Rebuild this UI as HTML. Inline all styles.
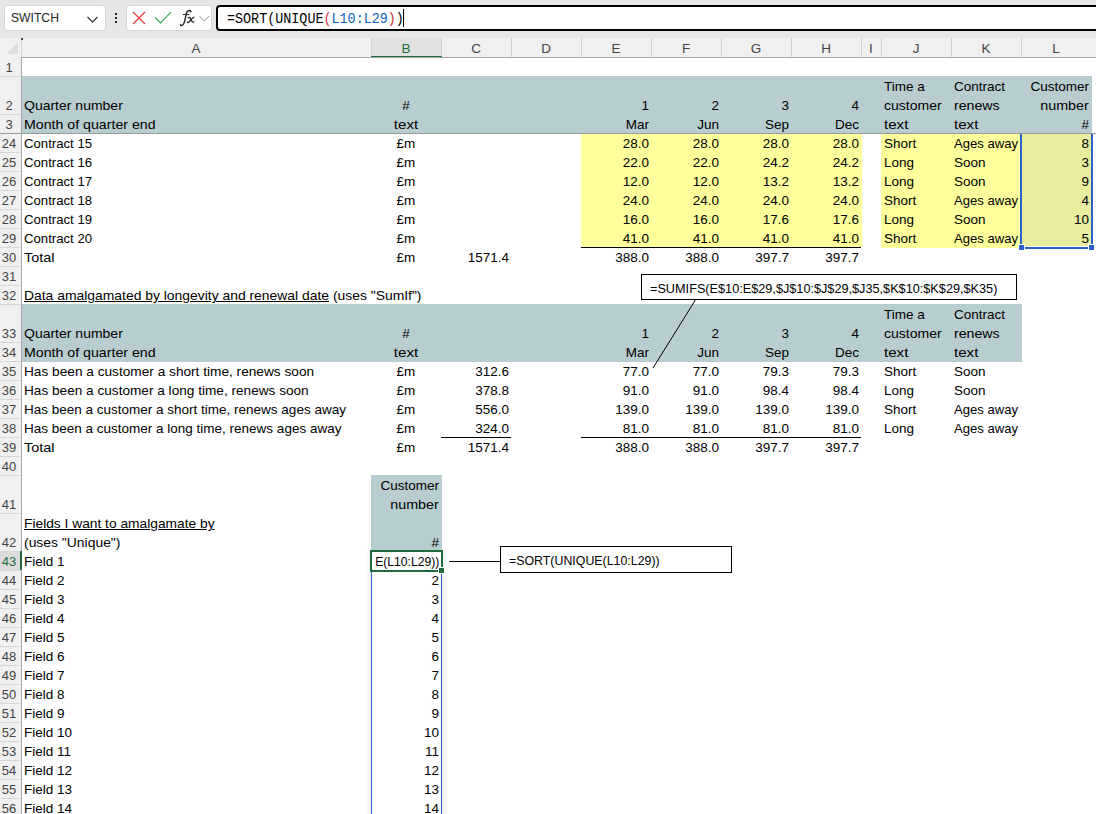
<!DOCTYPE html>
<html><head><meta charset="utf-8"><style>
html,body{margin:0;padding:0;width:1096px;height:814px;overflow:hidden;background:#fff;position:relative}
body{font-family:"Liberation Sans", sans-serif;}
.t{position:absolute;white-space:nowrap;font-size:13.5px;line-height:19px;height:19px;color:#000}
.c{text-align:center}
.rh{position:absolute;left:0;width:21px;font-size:13px;}
.rh span{position:absolute;left:0;width:18px;text-align:center;line-height:19px;margin-top:1px}
.ch{position:absolute;top:38px;height:18px;line-height:19px;text-align:center;font-size:13.5px;padding-top:1px;box-sizing:border-box}
</style></head><body>
<div style="position:absolute;left:0;top:0;width:1096px;height:38px;background:#e6e6e6"></div>
<div style="position:absolute;left:4px;top:5px;width:100px;height:24px;background:#fff;border:1px solid #d6d6d6;border-radius:4px"></div>
<div style="position:absolute;left:11px;top:6px;line-height:24px;font-size:13.5px;color:#222;transform:scaleX(0.9);transform-origin:0 0">SWITCH</div>
<div style="position:absolute;left:126px;top:5px;width:84px;height:24px;background:#fff;border:1px solid #d6d6d6;border-radius:4px"></div>
<svg style="position:absolute;left:0;top:0" width="220" height="38">
<polyline points="87.5,17 92.5,22 97.5,17" fill="none" stroke="#333" stroke-width="1.2"/>
<rect x="115" y="13" width="2" height="2" fill="#222"/><rect x="115" y="17" width="2" height="2" fill="#222"/><rect x="115" y="21" width="2" height="2" fill="#222"/>
<path d="M133 12 L145 24 M145 12 L133 24" stroke="#e83c3c" stroke-width="1.15" fill="none"/>
<polyline points="155,17.5 160.5,23 171,12.2" fill="none" stroke="#38a856" stroke-width="1.15"/>
<g fill="none" stroke="#2b2b2b" stroke-linecap="round">
<path d="M190.9,11.8 C190.7,10.2 188.6,9.9 187.4,11.4 C186.4,12.7 185.9,15 185.4,18 C184.9,21 184.4,23.6 182.6,25 C181.6,25.8 180.6,25.6 180.5,24.8" stroke-width="1.5"/>
<path d="M183.3,14.5 L188.8,14.5" stroke-width="1.2"/>
<path d="M188.3,17.6 C189.9,17.1 190.7,18 191.2,19.6 C191.7,21.1 192.3,22.7 193.8,21.9" stroke-width="1.3"/>
<path d="M193.9,17.4 C192.6,17.6 190.1,20.8 188.9,22.2 C188.3,22.9 187.6,22.7 187.4,22.1" stroke-width="1.3"/>
</g>
<polyline points="199.5,16 204.3,21 209.2,16" fill="none" stroke="#999" stroke-width="1"/>
</svg>
<div style="position:absolute;left:216px;top:5px;width:890px;height:22px;background:#fff;border:2px solid #000;border-radius:4px"></div>
<div style="position:absolute;left:227px;top:8px;line-height:24px;font-family:'Liberation Mono',monospace;font-size:15px;color:#000;white-space:nowrap;transform:scaleX(0.893);transform-origin:0 0">=SORT(UNIQUE<span style="color:#cc3344">(</span><span style="color:#0d62bd">L10:L29</span><span style="color:#cc3344">)</span>)</div>
<div style="position:absolute;left:403px;top:9px;width:1px;height:18px;background:#000"></div>
<div style="position:absolute;left:0;top:38px;width:1096px;height:19px;background:#f0f0f0"></div>
<div class="ch" style="left:21px;width:350px;background:#f0f0f0;color:#444">A</div><div style="position:absolute;left:21px;top:38px;width:1px;height:19px;background:#d0d0d0"></div><div class="ch" style="left:371px;width:70px;background:#e0e0e0;color:#1e6c3e">B</div><div style="position:absolute;left:371px;top:38px;width:1px;height:19px;background:#d0d0d0"></div><div class="ch" style="left:441px;width:70px;background:#f0f0f0;color:#444">C</div><div style="position:absolute;left:441px;top:38px;width:1px;height:19px;background:#d0d0d0"></div><div class="ch" style="left:511px;width:70px;background:#f0f0f0;color:#444">D</div><div style="position:absolute;left:511px;top:38px;width:1px;height:19px;background:#d0d0d0"></div><div class="ch" style="left:581px;width:70px;background:#f0f0f0;color:#444">E</div><div style="position:absolute;left:581px;top:38px;width:1px;height:19px;background:#d0d0d0"></div><div class="ch" style="left:651px;width:70px;background:#f0f0f0;color:#444">F</div><div style="position:absolute;left:651px;top:38px;width:1px;height:19px;background:#d0d0d0"></div><div class="ch" style="left:721px;width:70px;background:#f0f0f0;color:#444">G</div><div style="position:absolute;left:721px;top:38px;width:1px;height:19px;background:#d0d0d0"></div><div class="ch" style="left:791px;width:70px;background:#f0f0f0;color:#444">H</div><div style="position:absolute;left:791px;top:38px;width:1px;height:19px;background:#d0d0d0"></div><div class="ch" style="left:861px;width:20px;background:#f0f0f0;color:#444">I</div><div style="position:absolute;left:861px;top:38px;width:1px;height:19px;background:#d0d0d0"></div><div class="ch" style="left:881px;width:70px;background:#f0f0f0;color:#444">J</div><div style="position:absolute;left:881px;top:38px;width:1px;height:19px;background:#d0d0d0"></div><div class="ch" style="left:951px;width:70px;background:#f0f0f0;color:#444">K</div><div style="position:absolute;left:951px;top:38px;width:1px;height:19px;background:#d0d0d0"></div><div class="ch" style="left:1021px;width:70px;background:#f0f0f0;color:#444">L</div><div style="position:absolute;left:1021px;top:38px;width:1px;height:19px;background:#d0d0d0"></div><div style="position:absolute;left:371px;top:56px;width:71px;height:2px;background:#1e6c3e"></div>
<div style="position:absolute;left:0;top:57px;width:21px;height:1px;background:#d0d0d0"></div><div style="position:absolute;left:21px;top:57px;width:1075px;height:1px;background:#a8a8a8"></div>
<svg style="position:absolute;left:0;top:38px" width="21" height="19"><polygon points="18,4.5 18,16 6.5,16" fill="#dcdcdc"/></svg>
<div style="position:absolute;left:21px;top:76px;width:1071px;height:58px;background:#b7cdcf"></div><div style="position:absolute;left:581px;top:133px;width:281px;height:115px;background:#ffff9b"></div><div style="position:absolute;left:881px;top:133px;width:141px;height:115px;background:#ffff9b"></div><div style="position:absolute;left:1022px;top:133px;width:69px;height:113px;background:#e9eda0"></div><div style="position:absolute;left:21px;top:304px;width:1001px;height:58px;background:#b7cdcf"></div><div style="position:absolute;left:371px;top:475px;width:71px;height:77px;background:#b7cdcf"></div><div class="t" style="left:24px;top:96px;transform:scaleX(1.037);transform-origin:0 0;">Quarter number</div><div class="t c" style="left:371px;width:70px;top:96px;">#</div><div class="t" style="right:447px;top:96px;">1</div><div class="t" style="right:377px;top:96px;">2</div><div class="t" style="right:307px;top:96px;">3</div><div class="t" style="right:237px;top:96px;">4</div><div class="t" style="left:884px;top:77px;">Time a</div><div class="t" style="left:884px;top:96px;transform:scaleX(1.04);transform-origin:0 0;">customer</div><div class="t" style="left:954px;top:77px;">Contract</div><div class="t" style="left:954px;top:96px;transform:scaleX(1.05);transform-origin:0 0;">renews</div><div class="t" style="right:7px;top:77px;transform:scaleX(1.0);transform-origin:100% 0;">Customer</div><div class="t" style="right:7px;top:96px;transform:scaleX(1.06);transform-origin:100% 0;">number</div><div class="t" style="left:24px;top:115px;transform:scaleX(1.05);transform-origin:0 0;">Month of quarter end</div><div class="t c" style="left:371px;width:70px;top:115px;transform:scaleX(1.12);transform-origin:50% 0;">text</div><div class="t" style="right:447px;top:115px;">Mar</div><div class="t" style="right:377px;top:115px;">Jun</div><div class="t" style="right:307px;top:115px;">Sep</div><div class="t" style="right:237px;top:115px;">Dec</div><div class="t" style="left:884px;top:115px;transform:scaleX(1.12);transform-origin:0 0;">text</div><div class="t" style="left:954px;top:115px;transform:scaleX(1.12);transform-origin:0 0;">text</div><div class="t" style="right:7px;top:115px;">#</div><div class="t" style="left:24px;top:134px;transform:scaleX(0.975);transform-origin:0 0;">Contract 15</div><div class="t c" style="left:371px;width:70px;top:134px;">£m</div><div class="t" style="right:447px;top:134px;">28.0</div><div class="t" style="right:377px;top:134px;">28.0</div><div class="t" style="right:307px;top:134px;">28.0</div><div class="t" style="right:237px;top:134px;">28.0</div><div class="t" style="left:884px;top:134px;">Short</div><div class="t" style="left:954px;top:134px;transform:scaleX(0.97);transform-origin:0 0;">Ages away</div><div class="t" style="right:7px;top:134px;">8</div><div class="t" style="left:24px;top:153px;transform:scaleX(0.975);transform-origin:0 0;">Contract 16</div><div class="t c" style="left:371px;width:70px;top:153px;">£m</div><div class="t" style="right:447px;top:153px;">22.0</div><div class="t" style="right:377px;top:153px;">22.0</div><div class="t" style="right:307px;top:153px;">24.2</div><div class="t" style="right:237px;top:153px;">24.2</div><div class="t" style="left:884px;top:153px;">Long</div><div class="t" style="left:954px;top:153px;">Soon</div><div class="t" style="right:7px;top:153px;">3</div><div class="t" style="left:24px;top:172px;transform:scaleX(0.975);transform-origin:0 0;">Contract 17</div><div class="t c" style="left:371px;width:70px;top:172px;">£m</div><div class="t" style="right:447px;top:172px;">12.0</div><div class="t" style="right:377px;top:172px;">12.0</div><div class="t" style="right:307px;top:172px;">13.2</div><div class="t" style="right:237px;top:172px;">13.2</div><div class="t" style="left:884px;top:172px;">Long</div><div class="t" style="left:954px;top:172px;">Soon</div><div class="t" style="right:7px;top:172px;">9</div><div class="t" style="left:24px;top:191px;transform:scaleX(0.975);transform-origin:0 0;">Contract 18</div><div class="t c" style="left:371px;width:70px;top:191px;">£m</div><div class="t" style="right:447px;top:191px;">24.0</div><div class="t" style="right:377px;top:191px;">24.0</div><div class="t" style="right:307px;top:191px;">24.0</div><div class="t" style="right:237px;top:191px;">24.0</div><div class="t" style="left:884px;top:191px;">Short</div><div class="t" style="left:954px;top:191px;transform:scaleX(0.97);transform-origin:0 0;">Ages away</div><div class="t" style="right:7px;top:191px;">4</div><div class="t" style="left:24px;top:210px;transform:scaleX(0.975);transform-origin:0 0;">Contract 19</div><div class="t c" style="left:371px;width:70px;top:210px;">£m</div><div class="t" style="right:447px;top:210px;">16.0</div><div class="t" style="right:377px;top:210px;">16.0</div><div class="t" style="right:307px;top:210px;">17.6</div><div class="t" style="right:237px;top:210px;">17.6</div><div class="t" style="left:884px;top:210px;">Long</div><div class="t" style="left:954px;top:210px;">Soon</div><div class="t" style="right:7px;top:210px;">10</div><div class="t" style="left:24px;top:229px;transform:scaleX(0.975);transform-origin:0 0;">Contract 20</div><div class="t c" style="left:371px;width:70px;top:229px;">£m</div><div class="t" style="right:447px;top:229px;">41.0</div><div class="t" style="right:377px;top:229px;">41.0</div><div class="t" style="right:307px;top:229px;">41.0</div><div class="t" style="right:237px;top:229px;">41.0</div><div class="t" style="left:884px;top:229px;">Short</div><div class="t" style="left:954px;top:229px;transform:scaleX(0.97);transform-origin:0 0;">Ages away</div><div class="t" style="right:7px;top:229px;">5</div><div class="t" style="left:24px;top:248px;transform:scaleX(1.07);transform-origin:0 0;">Total</div><div class="t c" style="left:371px;width:70px;top:248px;">£m</div><div class="t" style="right:587px;top:248px;">1571.4</div><div class="t" style="right:447px;top:248px;">388.0</div><div class="t" style="right:377px;top:248px;">388.0</div><div class="t" style="right:307px;top:248px;">397.7</div><div class="t" style="right:237px;top:248px;">397.7</div><div style="position:absolute;left:581px;top:247px;width:280px;height:1px;background:#000"></div><div class="t" style="left:24px;top:286px;transform:scaleX(1.029);transform-origin:0 0;"><u>Data amalgamated by longevity and renewal date</u> (uses "SumIf")</div><div class="t" style="left:24px;top:324px;transform:scaleX(1.037);transform-origin:0 0;">Quarter number</div><div class="t c" style="left:371px;width:70px;top:324px;">#</div><div class="t" style="right:447px;top:324px;">1</div><div class="t" style="right:377px;top:324px;">2</div><div class="t" style="right:307px;top:324px;">3</div><div class="t" style="right:237px;top:324px;">4</div><div class="t" style="left:884px;top:305px;">Time a</div><div class="t" style="left:884px;top:324px;transform:scaleX(1.04);transform-origin:0 0;">customer</div><div class="t" style="left:954px;top:305px;">Contract</div><div class="t" style="left:954px;top:324px;transform:scaleX(1.05);transform-origin:0 0;">renews</div><div class="t" style="left:24px;top:343px;transform:scaleX(1.05);transform-origin:0 0;">Month of quarter end</div><div class="t c" style="left:371px;width:70px;top:343px;transform:scaleX(1.12);transform-origin:50% 0;">text</div><div class="t" style="right:447px;top:343px;">Mar</div><div class="t" style="right:377px;top:343px;">Jun</div><div class="t" style="right:307px;top:343px;">Sep</div><div class="t" style="right:237px;top:343px;">Dec</div><div class="t" style="left:884px;top:343px;transform:scaleX(1.12);transform-origin:0 0;">text</div><div class="t" style="left:954px;top:343px;transform:scaleX(1.12);transform-origin:0 0;">text</div><div class="t" style="left:24px;top:362px;transform:scaleX(1.012);transform-origin:0 0;">Has been a customer a short time, renews soon</div><div class="t c" style="left:371px;width:70px;top:362px;">£m</div><div class="t" style="right:587px;top:362px;">312.6</div><div class="t" style="right:447px;top:362px;">77.0</div><div class="t" style="right:377px;top:362px;">77.0</div><div class="t" style="right:307px;top:362px;">79.3</div><div class="t" style="right:237px;top:362px;">79.3</div><div class="t" style="left:884px;top:362px;">Short</div><div class="t" style="left:954px;top:362px;">Soon</div><div class="t" style="left:24px;top:381px;transform:scaleX(1.009);transform-origin:0 0;">Has been a customer a long time, renews soon</div><div class="t c" style="left:371px;width:70px;top:381px;">£m</div><div class="t" style="right:587px;top:381px;">378.8</div><div class="t" style="right:447px;top:381px;">91.0</div><div class="t" style="right:377px;top:381px;">91.0</div><div class="t" style="right:307px;top:381px;">98.4</div><div class="t" style="right:237px;top:381px;">98.4</div><div class="t" style="left:884px;top:381px;">Long</div><div class="t" style="left:954px;top:381px;">Soon</div><div class="t" style="left:24px;top:400px;">Has been a customer a short time, renews ages away</div><div class="t c" style="left:371px;width:70px;top:400px;">£m</div><div class="t" style="right:587px;top:400px;">556.0</div><div class="t" style="right:447px;top:400px;">139.0</div><div class="t" style="right:377px;top:400px;">139.0</div><div class="t" style="right:307px;top:400px;">139.0</div><div class="t" style="right:237px;top:400px;">139.0</div><div class="t" style="left:884px;top:400px;">Short</div><div class="t" style="left:954px;top:400px;transform:scaleX(0.97);transform-origin:0 0;">Ages away</div><div class="t" style="left:24px;top:419px;">Has been a customer a long time, renews ages away</div><div class="t c" style="left:371px;width:70px;top:419px;">£m</div><div class="t" style="right:587px;top:419px;">324.0</div><div class="t" style="right:447px;top:419px;">81.0</div><div class="t" style="right:377px;top:419px;">81.0</div><div class="t" style="right:307px;top:419px;">81.0</div><div class="t" style="right:237px;top:419px;">81.0</div><div class="t" style="left:884px;top:419px;">Long</div><div class="t" style="left:954px;top:419px;transform:scaleX(0.97);transform-origin:0 0;">Ages away</div><div class="t" style="left:24px;top:438px;transform:scaleX(1.07);transform-origin:0 0;">Total</div><div class="t c" style="left:371px;width:70px;top:438px;">£m</div><div class="t" style="right:587px;top:438px;">1571.4</div><div class="t" style="right:447px;top:438px;">388.0</div><div class="t" style="right:377px;top:438px;">388.0</div><div class="t" style="right:307px;top:438px;">397.7</div><div class="t" style="right:237px;top:438px;">397.7</div><div style="position:absolute;left:441px;top:437px;width:70px;height:1px;background:#000"></div><div style="position:absolute;left:581px;top:437px;width:280px;height:1px;background:#000"></div><div class="t" style="right:657px;top:476px;transform:scaleX(1.0);transform-origin:100% 0;">Customer</div><div class="t" style="right:657px;top:495px;transform:scaleX(1.06);transform-origin:100% 0;">number</div><div class="t" style="left:24px;top:514px;transform:scaleX(1.02);transform-origin:0 0;"><u>Fields I want to amalgamate by</u></div><div class="t" style="left:24px;top:533px;transform:scaleX(1.03);transform-origin:0 0;">(uses "Unique")</div><div class="t" style="right:657px;top:533px;">#</div><div class="t" style="left:24px;top:552px;">Field 1</div><div class="t" style="left:24px;top:571px;">Field 2</div><div class="t" style="right:657px;top:571px;">2</div><div class="t" style="left:24px;top:590px;">Field 3</div><div class="t" style="right:657px;top:590px;">3</div><div class="t" style="left:24px;top:609px;">Field 4</div><div class="t" style="right:657px;top:609px;">4</div><div class="t" style="left:24px;top:628px;">Field 5</div><div class="t" style="right:657px;top:628px;">5</div><div class="t" style="left:24px;top:647px;">Field 6</div><div class="t" style="right:657px;top:647px;">6</div><div class="t" style="left:24px;top:666px;">Field 7</div><div class="t" style="right:657px;top:666px;">7</div><div class="t" style="left:24px;top:685px;">Field 8</div><div class="t" style="right:657px;top:685px;">8</div><div class="t" style="left:24px;top:704px;">Field 9</div><div class="t" style="right:657px;top:704px;">9</div><div class="t" style="left:24px;top:723px;">Field 10</div><div class="t" style="right:657px;top:723px;">10</div><div class="t" style="left:24px;top:742px;">Field 11</div><div class="t" style="right:657px;top:742px;">11</div><div class="t" style="left:24px;top:761px;">Field 12</div><div class="t" style="right:657px;top:761px;">12</div><div class="t" style="left:24px;top:780px;">Field 13</div><div class="t" style="right:657px;top:780px;">13</div><div class="t" style="left:24px;top:799px;">Field 14</div><div class="t" style="right:657px;top:799px;">14</div><div style="position:absolute;left:372px;top:551px;width:68px;height:19px;overflow:hidden"><div class="t" style="right:1px;top:1px;transform:scaleX(0.9);transform-origin:100% 0">E(L10:L29))</div></div><div style="position:absolute;left:1020px;top:134px;width:2px;height:113px;background:#2f62c8"></div><div style="position:absolute;left:1091px;top:134px;width:2px;height:113px;background:#2f62c8"></div><div style="position:absolute;left:1020px;top:247px;width:73px;height:2px;background:#2f62c8"></div><div style="position:absolute;left:1018px;top:244px;width:7px;height:7px;background:#fff"></div><div style="position:absolute;left:1088px;top:244px;width:7px;height:7px;background:#fff"></div><div style="position:absolute;left:1019px;top:245px;width:5px;height:5px;background:#2f62c8"></div><div style="position:absolute;left:1089px;top:245px;width:5px;height:5px;background:#2f62c8"></div><div style="position:absolute;left:365px;top:551px;width:6px;height:263px;background:linear-gradient(to left,rgba(0,0,0,0.065),rgba(0,0,0,0))"></div><div style="position:absolute;left:442px;top:551px;width:6px;height:263px;background:linear-gradient(to right,rgba(0,0,0,0.065),rgba(0,0,0,0))"></div><div style="position:absolute;left:371px;top:551px;width:1px;height:263px;background:#3264c2"></div><div style="position:absolute;left:441px;top:551px;width:1px;height:263px;background:#3264c2"></div><div style="position:absolute;left:370px;top:550px;width:73px;height:22px;border:2px solid #1e6c3e;box-sizing:border-box;background:transparent"></div><div style="position:absolute;left:438px;top:567px;width:7px;height:7px;background:#fff"></div><div style="position:absolute;left:439px;top:568px;width:5px;height:5px;background:#1e6c3e"></div><div style="position:absolute;left:641px;top:274px;width:376px;height:26px;border:1px solid #000;box-sizing:border-box;background:#fff"></div><div class="t" style="left:650px;top:280px;font-size:12.7px">=SUMIFS(E$10:E$29,$J$10:$J$29,$J35,$K$10:$K$29,$K35)</div><svg style="position:absolute;left:0;top:0" width="1096" height="814"><line x1="696" y1="299" x2="653" y2="368" stroke="#000" stroke-width="1"/><line x1="449" y1="561.5" x2="500" y2="561.5" stroke="#000" stroke-width="1"/></svg><div style="position:absolute;left:500px;top:546px;width:232px;height:27px;border:1px solid #000;box-sizing:border-box;background:#fff"></div><div class="t" style="left:509px;top:552px;font-size:12.7px;transform:scaleX(0.975);transform-origin:0 0">=SORT(UNIQUE(L10:L29))</div>
<div class="rh" style="top:57px;height:19px;background:#f0f0f0;color:#444"><span style="top:0px">1</span></div><div class="rh" style="top:76px;height:38px;background:#f0f0f0;color:#444"><span style="top:19px">2</span></div><div class="rh" style="top:114px;height:19px;background:#f0f0f0;color:#444"><span style="top:0px">3</span></div><div class="rh" style="top:133px;height:19px;background:#f0f0f0;color:#444"><span style="top:0px">24</span></div><div class="rh" style="top:152px;height:19px;background:#f0f0f0;color:#444"><span style="top:0px">25</span></div><div class="rh" style="top:171px;height:19px;background:#f0f0f0;color:#444"><span style="top:0px">26</span></div><div class="rh" style="top:190px;height:19px;background:#f0f0f0;color:#444"><span style="top:0px">27</span></div><div class="rh" style="top:209px;height:19px;background:#f0f0f0;color:#444"><span style="top:0px">28</span></div><div class="rh" style="top:228px;height:19px;background:#f0f0f0;color:#444"><span style="top:0px">29</span></div><div class="rh" style="top:247px;height:19px;background:#f0f0f0;color:#444"><span style="top:0px">30</span></div><div class="rh" style="top:266px;height:19px;background:#f0f0f0;color:#444"><span style="top:0px">31</span></div><div class="rh" style="top:285px;height:19px;background:#f0f0f0;color:#444"><span style="top:0px">32</span></div><div class="rh" style="top:304px;height:38px;background:#f0f0f0;color:#444"><span style="top:19px">33</span></div><div class="rh" style="top:342px;height:19px;background:#f0f0f0;color:#444"><span style="top:0px">34</span></div><div class="rh" style="top:361px;height:19px;background:#f0f0f0;color:#444"><span style="top:0px">35</span></div><div class="rh" style="top:380px;height:19px;background:#f0f0f0;color:#444"><span style="top:0px">36</span></div><div class="rh" style="top:399px;height:19px;background:#f0f0f0;color:#444"><span style="top:0px">37</span></div><div class="rh" style="top:418px;height:19px;background:#f0f0f0;color:#444"><span style="top:0px">38</span></div><div class="rh" style="top:437px;height:19px;background:#f0f0f0;color:#444"><span style="top:0px">39</span></div><div class="rh" style="top:456px;height:19px;background:#f0f0f0;color:#444"><span style="top:0px">40</span></div><div class="rh" style="top:475px;height:38px;background:#f0f0f0;color:#444"><span style="top:19px">41</span></div><div class="rh" style="top:513px;height:38px;background:#f0f0f0;color:#444"><span style="top:19px">42</span></div><div class="rh" style="top:551px;height:19px;background:#dcdcdc;color:#1e6c3e"><span style="top:0px">43</span></div><div class="rh" style="top:570px;height:19px;background:#f0f0f0;color:#444"><span style="top:0px">44</span></div><div class="rh" style="top:589px;height:19px;background:#f0f0f0;color:#444"><span style="top:0px">45</span></div><div class="rh" style="top:608px;height:19px;background:#f0f0f0;color:#444"><span style="top:0px">46</span></div><div class="rh" style="top:627px;height:19px;background:#f0f0f0;color:#444"><span style="top:0px">47</span></div><div class="rh" style="top:646px;height:19px;background:#f0f0f0;color:#444"><span style="top:0px">48</span></div><div class="rh" style="top:665px;height:19px;background:#f0f0f0;color:#444"><span style="top:0px">49</span></div><div class="rh" style="top:684px;height:19px;background:#f0f0f0;color:#444"><span style="top:0px">50</span></div><div class="rh" style="top:703px;height:19px;background:#f0f0f0;color:#444"><span style="top:0px">51</span></div><div class="rh" style="top:722px;height:19px;background:#f0f0f0;color:#444"><span style="top:0px">52</span></div><div class="rh" style="top:741px;height:19px;background:#f0f0f0;color:#444"><span style="top:0px">53</span></div><div class="rh" style="top:760px;height:19px;background:#f0f0f0;color:#444"><span style="top:0px">54</span></div><div class="rh" style="top:779px;height:19px;background:#f0f0f0;color:#444"><span style="top:0px">55</span></div><div class="rh" style="top:798px;height:19px;background:#f0f0f0;color:#444"><span style="top:0px">56</span></div><div style="position:absolute;left:0;top:76px;width:21px;height:1px;background:#d6d6d6"></div><div style="position:absolute;left:0;top:114px;width:21px;height:1px;background:#d6d6d6"></div><div style="position:absolute;left:0;top:133px;width:21px;height:1px;background:#d6d6d6"></div><div style="position:absolute;left:0;top:152px;width:21px;height:1px;background:#d6d6d6"></div><div style="position:absolute;left:0;top:171px;width:21px;height:1px;background:#d6d6d6"></div><div style="position:absolute;left:0;top:190px;width:21px;height:1px;background:#d6d6d6"></div><div style="position:absolute;left:0;top:209px;width:21px;height:1px;background:#d6d6d6"></div><div style="position:absolute;left:0;top:228px;width:21px;height:1px;background:#d6d6d6"></div><div style="position:absolute;left:0;top:247px;width:21px;height:1px;background:#d6d6d6"></div><div style="position:absolute;left:0;top:266px;width:21px;height:1px;background:#d6d6d6"></div><div style="position:absolute;left:0;top:285px;width:21px;height:1px;background:#d6d6d6"></div><div style="position:absolute;left:0;top:304px;width:21px;height:1px;background:#d6d6d6"></div><div style="position:absolute;left:0;top:342px;width:21px;height:1px;background:#d6d6d6"></div><div style="position:absolute;left:0;top:361px;width:21px;height:1px;background:#d6d6d6"></div><div style="position:absolute;left:0;top:380px;width:21px;height:1px;background:#d6d6d6"></div><div style="position:absolute;left:0;top:399px;width:21px;height:1px;background:#d6d6d6"></div><div style="position:absolute;left:0;top:418px;width:21px;height:1px;background:#d6d6d6"></div><div style="position:absolute;left:0;top:437px;width:21px;height:1px;background:#d6d6d6"></div><div style="position:absolute;left:0;top:456px;width:21px;height:1px;background:#d6d6d6"></div><div style="position:absolute;left:0;top:475px;width:21px;height:1px;background:#d6d6d6"></div><div style="position:absolute;left:0;top:513px;width:21px;height:1px;background:#d6d6d6"></div><div style="position:absolute;left:0;top:551px;width:21px;height:1px;background:#d6d6d6"></div><div style="position:absolute;left:0;top:570px;width:21px;height:1px;background:#d6d6d6"></div><div style="position:absolute;left:0;top:589px;width:21px;height:1px;background:#d6d6d6"></div><div style="position:absolute;left:0;top:608px;width:21px;height:1px;background:#d6d6d6"></div><div style="position:absolute;left:0;top:627px;width:21px;height:1px;background:#d6d6d6"></div><div style="position:absolute;left:0;top:646px;width:21px;height:1px;background:#d6d6d6"></div><div style="position:absolute;left:0;top:665px;width:21px;height:1px;background:#d6d6d6"></div><div style="position:absolute;left:0;top:684px;width:21px;height:1px;background:#d6d6d6"></div><div style="position:absolute;left:0;top:703px;width:21px;height:1px;background:#d6d6d6"></div><div style="position:absolute;left:0;top:722px;width:21px;height:1px;background:#d6d6d6"></div><div style="position:absolute;left:0;top:741px;width:21px;height:1px;background:#d6d6d6"></div><div style="position:absolute;left:0;top:760px;width:21px;height:1px;background:#d6d6d6"></div><div style="position:absolute;left:0;top:779px;width:21px;height:1px;background:#d6d6d6"></div><div style="position:absolute;left:0;top:798px;width:21px;height:1px;background:#d6d6d6"></div><div style="position:absolute;left:0;top:817px;width:21px;height:1px;background:#d6d6d6"></div>
<div style="position:absolute;left:21px;top:38px;width:1px;height:19px;background:#d4d4d4"></div><div style="position:absolute;left:21px;top:57px;width:1px;height:757px;background:#a8a8a8"></div><div style="position:absolute;left:20.5px;top:37.5px;width:2px;height:2px;border-radius:50%;background:#111"></div>
<div style="position:absolute;left:0;top:133px;width:1096px;height:1px;background:#9c9c9c"></div>
<div style="position:absolute;left:20px;top:551px;width:2px;height:19px;background:#1e6c3e"></div>
</body></html>
